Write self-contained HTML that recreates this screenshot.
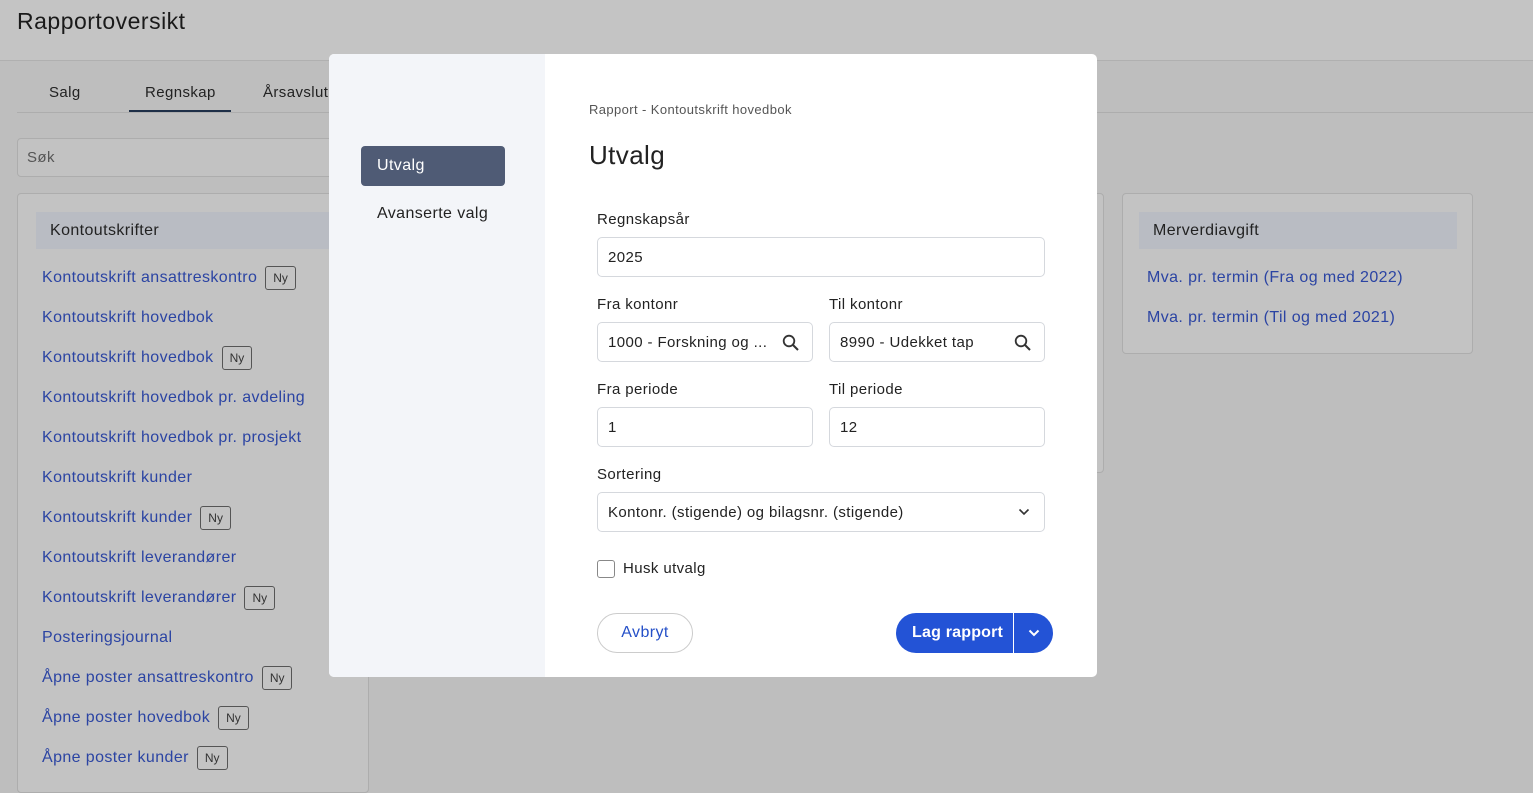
<!DOCTYPE html>
<html><head><meta charset="utf-8"><style>
*{box-sizing:border-box;margin:0;padding:0}
body{width:1533px;height:775px;overflow:hidden;font-family:"Liberation Sans",sans-serif;background:#bebebe;position:relative;color:#222;letter-spacing:0.4px}
.hdr{position:absolute;left:0;top:0;width:1533px;height:61px;background:#c4c4c4;border-bottom:1px solid #b0b0b0}
.hdr h1{position:absolute;left:17px;top:8px;font-size:23px;font-weight:normal;color:#1a1a1a;letter-spacing:0.5px}
.tabs{position:absolute;left:17px;top:62px;width:1516px;height:51px;border-bottom:1px solid #adadad}
.tab{position:absolute;top:22px;font-size:15px;color:#222}
.ul{position:absolute;left:112px;top:48px;width:102px;height:2px;background:#1e2f47}
.search{position:absolute;left:17px;top:138px;width:330px;height:39px;border:1px solid #adadad;border-radius:4px;background:#c2c2c2;font-size:15px;color:#555;padding:10px 9px}
.card{position:absolute;background:#c3c3c3;border:1px solid #adadad;border-radius:4px}
.chead{position:absolute;left:18px;top:18px;height:37px;background:#b9bcc3;font-size:16px;padding:10px 14px;color:#222}
.link{position:absolute;left:42px;font-size:16px;color:#2b44a3;white-space:nowrap;height:20px;line-height:20px;display:flex;align-items:center}
.ny{display:inline-block;margin-left:8px;border:1px solid #555;border-radius:3px;font-size:12px;padding:0 7px;height:24px;line-height:22px;color:#333;letter-spacing:0}
.modal{position:absolute;left:329px;top:54px;width:768px;height:623px;background:#fff;border-radius:5px;overflow:hidden}
.side{position:absolute;left:0;top:0;width:216px;height:623px;background:#f3f5f9}
.sel{position:absolute;left:32px;top:92px;width:144px;height:40px;background:#4f5b75;border-radius:4px;color:#fff;font-size:16px;padding:11px 16px}
.adv{position:absolute;left:48px;top:151px;font-size:16px;color:#222}
.lbl{position:absolute;font-size:15px;color:#222}
.inp{position:absolute;height:40px;border:1px solid #d5d8dd;border-radius:5px;font-size:15px;padding:11px 10px;color:#222;white-space:nowrap}
.mag{position:absolute;right:12px;top:11px}
</style></head><body>
<div class="hdr"><h1>Rapportoversikt</h1></div>
<div class="tabs"><span class="tab" style="left:32px">Salg</span><span class="tab" style="left:128px">Regnskap</span><span class="tab" style="left:246px">Årsavslutning</span><div class="ul"></div></div>
<div class="search">Søk</div>
<div class="card" style="left:17px;top:193px;width:352px;height:600px"><div class="chead" style="width:320px">Kontoutskrifter</div></div>
<div class="card" style="left:380px;top:193px;width:724px;height:280px"></div>
<div class="card" style="left:1122px;top:193px;width:351px;height:161px"><div class="chead" style="left:16px;width:318px">Merverdiavgift</div>
<div class="link" style="left:24px;top:74px">Mva. pr. termin (Fra og med 2022)</div>
<div class="link" style="left:24px;top:114px">Mva. pr. termin (Til og med 2021)</div></div>
<div class="link" style="top:268px">Kontoutskrift ansattreskontro<span class="ny">Ny</span></div>
<div class="link" style="top:308px">Kontoutskrift hovedbok</div>
<div class="link" style="top:348px">Kontoutskrift hovedbok<span class="ny">Ny</span></div>
<div class="link" style="top:388px">Kontoutskrift hovedbok pr. avdeling</div>
<div class="link" style="top:428px">Kontoutskrift hovedbok pr. prosjekt</div>
<div class="link" style="top:468px">Kontoutskrift kunder</div>
<div class="link" style="top:508px">Kontoutskrift kunder<span class="ny">Ny</span></div>
<div class="link" style="top:548px">Kontoutskrift leverandører</div>
<div class="link" style="top:588px">Kontoutskrift leverandører<span class="ny">Ny</span></div>
<div class="link" style="top:628px">Posteringsjournal</div>
<div class="link" style="top:668px">Åpne poster ansattreskontro<span class="ny">Ny</span></div>
<div class="link" style="top:708px">Åpne poster hovedbok<span class="ny">Ny</span></div>
<div class="link" style="top:748px">Åpne poster kunder<span class="ny">Ny</span></div>

<div class="modal">
<div class="side"><div class="sel">Utvalg</div><div class="adv">Avanserte valg</div></div>
<div class="lbl" style="left:260px;top:48px;font-size:13px;color:#555">Rapport - Kontoutskrift hovedbok</div>
<div class="lbl" style="left:260px;top:86px;font-size:26px">Utvalg</div>
<div class="lbl" style="left:268px;top:157px">Regnskapsår</div>
<div class="inp" style="left:268px;top:183px;width:448px">2025</div>
<div class="lbl" style="left:268px;top:242px">Fra kontonr</div>
<div class="lbl" style="left:500px;top:242px">Til kontonr</div>
<div class="inp" style="left:268px;top:268px;width:216px">1000 - Forskning og ...<svg class="mag" width="18" height="18" viewBox="0 0 18 18"><circle cx="7" cy="7" r="5.3" fill="none" stroke="#333" stroke-width="1.8"/><path d="M11 11l5 5" stroke="#333" stroke-width="2"/></svg></div>
<div class="inp" style="left:500px;top:268px;width:216px">8990 - Udekket tap<svg class="mag" width="18" height="18" viewBox="0 0 18 18"><circle cx="7" cy="7" r="5.3" fill="none" stroke="#333" stroke-width="1.8"/><path d="M11 11l5 5" stroke="#333" stroke-width="2"/></svg></div>
<div class="lbl" style="left:268px;top:327px">Fra periode</div>
<div class="lbl" style="left:500px;top:327px">Til periode</div>
<div class="inp" style="left:268px;top:353px;width:216px">1</div>
<div class="inp" style="left:500px;top:353px;width:216px">12</div>
<div class="lbl" style="left:268px;top:412px">Sortering</div>
<div class="inp" style="left:268px;top:438px;width:448px">Kontonr. (stigende) og bilagsnr. (stigende)<svg style="position:absolute;right:14px;top:15px" width="12" height="8" viewBox="0 0 12 8"><path d="M1.5 1.5l4.5 4.5 4.5-4.5" fill="none" stroke="#333" stroke-width="1.6"/></svg></div>
<div style="position:absolute;left:268px;top:506px;width:18px;height:18px;border:1px solid #888;border-radius:3px"></div>
<div class="lbl" style="left:294px;top:506px">Husk utvalg</div>
<div style="position:absolute;left:268px;top:559px;width:96px;height:40px;border:1px solid #ccc;border-radius:20px;color:#2550c8;font-size:16px;text-align:center;line-height:38px">Avbryt</div>
<div style="position:absolute;left:567px;top:559px;width:157px;height:40px;background:#2353d6;border-radius:20px;color:#fff;font-size:16px;font-weight:bold">
<span style="position:absolute;left:16px;top:11px;letter-spacing:0.2px">Lag rapport</span>
<div style="position:absolute;left:117px;top:0;width:1px;height:40px;background:#fff"></div>
<svg style="position:absolute;left:132px;top:16px" width="12" height="8" viewBox="0 0 12 8"><path d="M1.5 1.5l4.5 4.5 4.5-4.5" fill="none" stroke="#fff" stroke-width="2"/></svg></div>
</div>
</body></html>
